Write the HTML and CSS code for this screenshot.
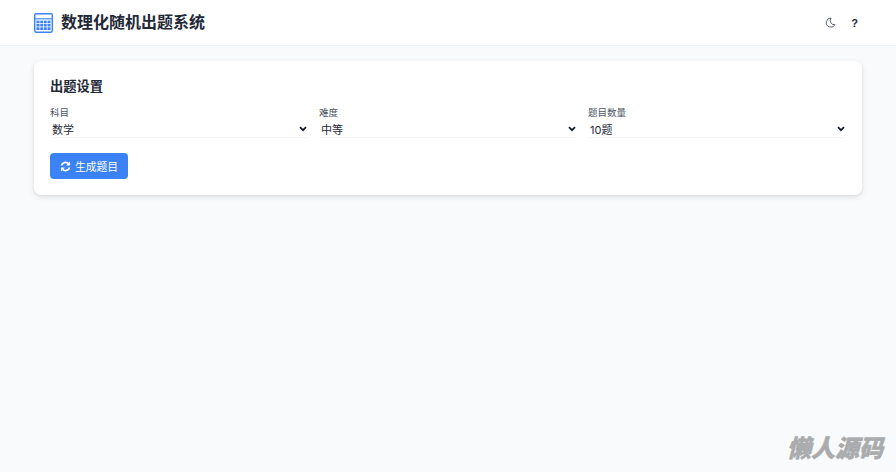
FILE: index.html
```html
<!DOCTYPE html>
<html lang="zh">
<head>
<meta charset="utf-8">
<title>数理化随机出题系统</title>
<link rel="stylesheet" href="styles.css">
</head>
<body>
<header class="topbar">
  <div class="brand">
    <svg class="brand-icon" viewBox="0 0 20 21" width="19" height="20" aria-hidden="true">
      <rect x="0.75" y="0.75" width="18.5" height="19.5" rx="1.5" fill="#fff" stroke="#3b82f6" stroke-width="1.5"/>
      <rect x="0" y="5.5" width="20" height="1.2" fill="#3b82f6"/>
      <g fill="#3b82f6">
        <rect x="2.6" y="8" width="3.2" height="2.7"/><rect x="6.6" y="8" width="3" height="2.7"/><rect x="10.4" y="8" width="3" height="2.7"/><rect x="14.2" y="8" width="3.2" height="2.7"/>
        <rect x="2.6" y="11.5" width="3.2" height="2.7"/><rect x="6.6" y="11.5" width="3" height="2.7"/><rect x="10.4" y="11.5" width="3" height="2.7"/><rect x="14.2" y="11.5" width="3.2" height="2.7"/>
        <rect x="2.6" y="15" width="3.2" height="2.9"/><rect x="6.6" y="15" width="3" height="2.9"/><rect x="10.4" y="15" width="3" height="2.9"/><rect x="14.2" y="15" width="3.2" height="2.9"/>
      </g>
    </svg>
    <h1 class="brand-title">数理化随机出题系统</h1>
  </div>
  <div class="actions">
    <button class="icon-btn" type="button" aria-label="主题">
      <svg viewBox="0 0 12 12" width="11" height="11" aria-hidden="true"><path d="M6.6 1.1A5 5 0 1 0 10.9 8.4 4.6 4.6 0 0 1 6.6 1.1Z" fill="none" stroke="#4b5563" stroke-width="1"/></svg>
    </button>
    <button class="icon-btn help" type="button" aria-label="帮助">?</button>
  </div>
</header>
<main class="content">
  <section class="card">
    <h2 class="card-title">出题设置</h2>
    <div class="fields">
      <label class="field"><span class="field-label">科目</span>
        <select class="field-select"><option>数学</option><option>物理</option><option>化学</option></select>
      </label>
      <label class="field"><span class="field-label">难度</span>
        <select class="field-select"><option>中等</option><option>简单</option><option>困难</option></select>
      </label>
      <label class="field"><span class="field-label">题目数量</span>
        <select class="field-select"><option>10题</option><option>20题</option></select>
      </label>
    </div>
    <button class="primary" type="button">
      <svg viewBox="0 0 12 12" width="11" height="11" aria-hidden="true"><g fill="none" stroke="#fff" stroke-width="1.9"><path d="M1.6 5A4.5 4.5 0 0 1 9.4 3.2"/><path d="M10.4 7A4.5 4.5 0 0 1 2.6 8.8"/></g><path d="M11 0.6V5H6.6Z M1 11.4V7H5.4Z" fill="#fff"/></svg>
      <span>生成题目</span>
    </button>
  </section>
</main>
<div class="watermark">懒人源码</div>
</body>
</html>
```

FILE: styles.css
```css
* { box-sizing: border-box; }
html, body { height: 100%; }
body {
  margin: 0;
  background: #f9fafb;
  color: #1f2937;
  font-family: Inter, "Noto Sans CJK SC", "Liberation Sans", sans-serif;
  overflow: hidden;
  position: relative;
}
.topbar {
  height: 46px;
  background: #fff;
  border-bottom: 1px solid #f0f1f4;
  padding: 0 34px;
  display: flex;
  align-items: center;
  justify-content: space-between;
}
.brand { display: flex; align-items: center; gap: 8px; }
.brand-icon { display: block; }
.brand-title { margin: 0 0 1px; font-size: 16px; line-height: 24px; font-weight: 700; color: #1f2937; }
.actions { display: flex; align-items: center; gap: 13px; padding-right: 2px; }
.icon-btn {
  width: 11px;
  height: 14px;
  padding: 0;
  border: 0;
  background: none;
  display: flex;
  align-items: center;
  justify-content: center;
}
.help { font: 900 11px/14px "Liberation Sans", sans-serif; color: #1f2937; }
.content { padding: 15px 34px 0; }
.card {
  background: #fff;
  border-radius: 7px;
  box-shadow: 0 2px 6px rgba(0,0,0,.1), 0 1px 3px rgba(0,0,0,.05);
  padding: 15px 16px 16px;
  height: 134px;
}
.card-title { margin: 0 0 11px; font-size: 13.25px; line-height: 20px; font-weight: 700; color: #1f2937; }
.fields { display: grid; grid-template-columns: repeat(3, 1fr); gap: 11px; }
.field { display: block; }
.field-label { display: block; font-size: 9.5px; line-height: 12px; color: #4b5563; margin-bottom: 1px; }
.field-select {
  display: block;
  width: 100%;
  height: 18px;
  padding: 2px 0 0 2px;
  appearance: none;
  background: #fff url("data:image/svg+xml,%3Csvg xmlns='http://www.w3.org/2000/svg' width='8' height='6' viewBox='0 0 8 6'%3E%3Cpath d='M1 1.2 4 4.2 7 1.2' fill='none' stroke='%23111827' stroke-width='1.7'/%3E%3C/svg%3E") no-repeat right 1px top 6px;
  border: 0;
  border-bottom: 1px solid #f5f6f8;
  border-radius: 2px;
  color: #1f2937;
  font-family: inherit;
  font-size: 11px;
}
.primary {
  margin-top: 15px;
  height: 26px;
  width: 78px;
  padding: 0;
  display: flex;
  align-items: center;
  justify-content: center;
  gap: 4px;
  border: 0;
  border-radius: 4px;
  background: #3b82f6;
  color: #fff;
  font-family: inherit;
  font-size: 10.8px;
}
.watermark {
  position: absolute;
  right: 13px;
  bottom: 11px;
  font-size: 24px;
  line-height: 28px;
  font-weight: 900;
  font-style: italic;
  color: #a9abad;
  -webkit-text-stroke: 0.5px #a9abad;
  font-family: "Noto Sans CJK SC", sans-serif;
}
```
